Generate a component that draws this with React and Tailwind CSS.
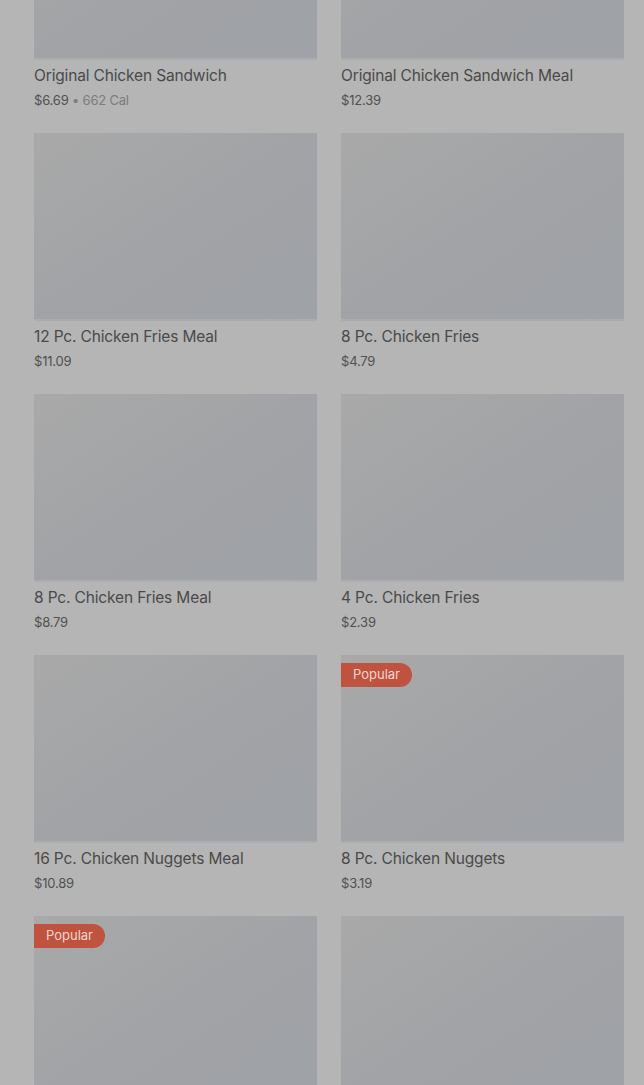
const items = [
    { name: 'Original Chicken Sandwich', price: '$6.69', cal: '662 Cal' },
    { name: 'Original Chicken Sandwich Meal', price: '$12.39' },
    { name: '12 Pc. Chicken Fries Meal', price: '$11.09' },
    { name: '8 Pc. Chicken Fries', price: '$4.79' },
    { name: '8 Pc. Chicken Fries Meal', price: '$8.79' },
    { name: '4 Pc. Chicken Fries', price: '$2.39' },
    { name: '16 Pc. Chicken Nuggets Meal', price: '$10.89' },
    { name: '8 Pc. Chicken Nuggets', price: '$3.19', popular: true },
    { name: '', price: '', popular: true },
    { name: '', price: '' },
];

function MenuCard({ item }) {
    return (
        <div className="flex flex-col">
            <div className="relative h-[188px] w-full bg-gradient-to-br from-[#a9a9a9] via-[#a1a3a6] to-[#9fa2a7] border-b-2 border-[#acadaf]">
                {item.popular && (
                    <span className="absolute left-0 top-2 h-6 px-3 flex items-center rounded-r-full bg-[#bf533f] text-[#f1d7cf] text-[13px]">
                        Popular
                    </span>
                )}
            </div>
            <div className="mt-[6px] text-[15.5px] leading-5 text-[#4a4a4a] tracking-[-0.15px]">
                {item.name}
            </div>
            <div className="mt-[4px] text-[13px] leading-5 text-[#515151] tracking-[-0.2px]">
                {item.price}
                {item.cal && <span className="text-[#7c7c7c]"> • {item.cal}</span>}
            </div>
        </div>
    );
}

function App() {
    return (
        <div
            className="min-h-screen h-[1085px] overflow-hidden bg-[#b5b5b5]"
            style={{ fontFamily: 'Inter, "Noto Sans", sans-serif' }}
        >
            <div className="-mt-[128px] pl-[34px] pr-[20px] grid grid-cols-2 gap-x-6 gap-y-[23px]">
                {items.map((item, i) => (
                    <MenuCard key={i} item={item} />
                ))}
            </div>
        </div>
    );
}

export default App;
